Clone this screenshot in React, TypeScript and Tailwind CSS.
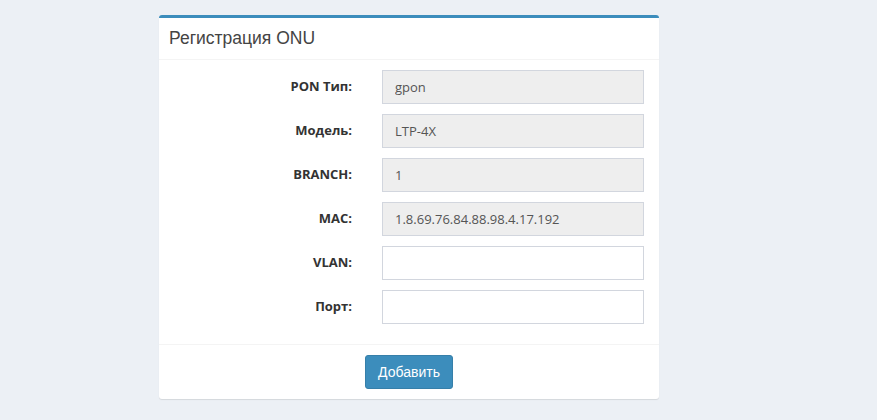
import React from 'react';

// --- Types ---
type Field = {
  label: string;
  value?: string;
  disabled: boolean;
};

const fields: Field[] = [
  { label: 'PON Тип:', value: 'gpon', disabled: true },
  { label: 'Модель:', value: 'LTP-4X', disabled: true },
  { label: 'BRANCH:', value: '1', disabled: true },
  { label: 'MAC:', value: '1.8.69.76.84.88.98.4.17.192', disabled: true },
  { label: 'VLAN:', value: '', disabled: false },
  { label: 'Порт:', value: '', disabled: false },
];

const FormRow = ({ label, value, disabled }: Field) => (
  <div className="flex items-center">
    <label className="w-[183px] text-right text-[13px] font-bold text-[#333] font-['Open_Sans',sans-serif]">{label}</label>
    <div className="ml-[30px] w-[262px]">
      <input
        type="text"
        defaultValue={value}
        disabled={disabled}
        className={`block w-full h-[34px] px-3 border border-[#d2d6de] text-[13px] text-[#555] font-['Open_Sans',sans-serif] outline-none ${disabled ? 'bg-[#eee]' : 'bg-white'}`}
      />
    </div>
  </div>
);

export default function App() {
  return (
    <div className="min-h-screen bg-[#ecf0f5] pt-[15px] pl-[159px]">
      {/* Box */}
      <div className="w-[500px] bg-white border-t-[3px] border-[#3c8dbc] rounded-[3px] shadow-[0_1px_1px_rgba(0,0,0,0.1)]">
        {/* Header */}
        <div className="px-[10px] py-[10px] border-b border-[#f4f4f4]">
          <h3 className="text-[17.5px] leading-[21px] text-[#444] font-['Liberation_Sans',Arial,sans-serif]">Регистрация ONU</h3>
        </div>

        {/* Body */}
        <div className="p-[10px] flex flex-col gap-[10px] pb-[20px]">
          {fields.map((f) => (
            <FormRow key={f.label} {...f} />
          ))}
        </div>

        {/* Footer */}
        <div className="border-t border-[#f4f4f4] p-[10px] flex justify-center">
          <button className="h-[34px] w-[88px] bg-[#3c8dbc] border border-[#367fa9] rounded-[3px] text-white text-[14px] font-['Liberation_Sans',Arial,sans-serif]">
            Добавить
          </button>
        </div>
      </div>
    </div>
  );
}
